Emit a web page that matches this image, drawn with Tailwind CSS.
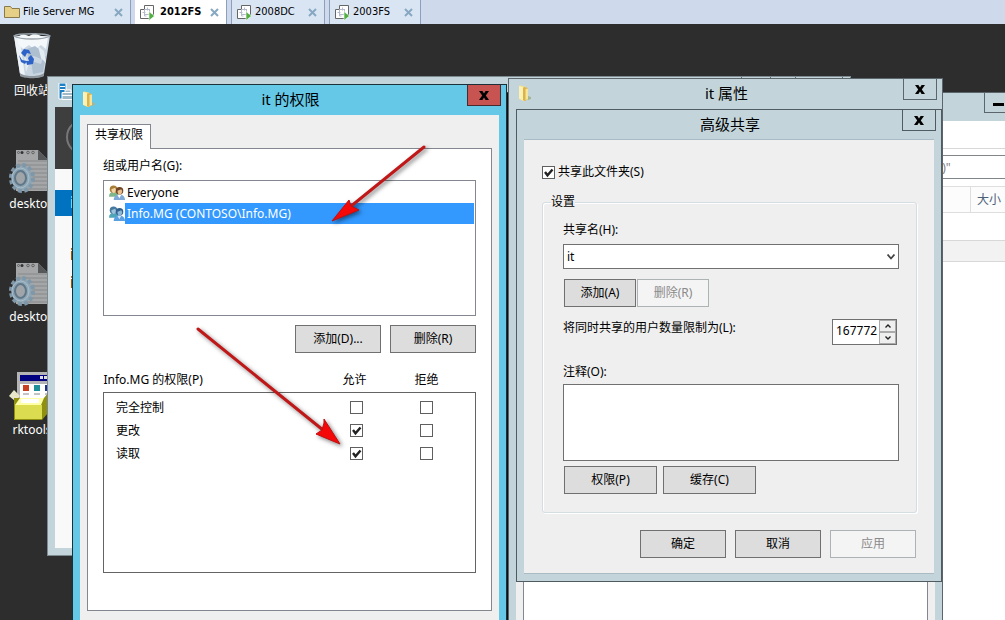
<!DOCTYPE html>
<html lang="zh-CN">
<head>
<meta charset="utf-8">
<meta name="viewport" content="width=device-width, initial-scale=1">
<title>2012FS</title>
<script src="https://cdn.jsdelivr.net/npm/@tailwindcss/browser@4"></script>
</head>
<body class="flex h-screen flex-col overflow-hidden bg-[#2d2d2d] font-['Noto_Sans','Noto_Sans_CJK_SC',sans-serif] text-xs leading-4 text-black">

<!-- Shared symbols -->
<svg class="hidden" aria-hidden="true">
  <symbol id="x" viewBox="0 0 10 9"><path d="M0 0h3.400L5 2.600 6.600 0H10L6.800 4.500 10 9H6.600L5 6.400 3.400 9H0l3.200-4.500z" fill="currentColor"/></symbol>
  <symbol id="tabx" viewBox="0 0 9 9"><path d="M1 1l7 7M8 1L1 8" stroke="#86a8c0" stroke-width="2" fill="none"/></symbol>
  <symbol id="check" viewBox="0 0 13 13"><path d="M3 6l2.500 3.300L10.500 3.500" stroke="#222" stroke-width="2.400" fill="none"/></symbol>
  <symbol id="vm" viewBox="0 0 17 17">
    <path d="M5.500 1.500h9v9h-9z" fill="#fff" stroke="#666"/>
    <path d="M1.500 5.500h9v9h-9z" fill="#fff" stroke="#666"/>
    <path d="M5.500 5.500h5v5h-5z" fill="#fff" stroke="#b4bccb"/>
    <path d="M3.500 8.500h3M8.500 3.500v3M5.500 8v4h2" stroke="#b4bccb" fill="none"/>
    <path d="M10 7.500v9l5.500-4.500z" fill="#52b043" stroke="#fff" stroke-width=".6"/>
  </symbol>
  <symbol id="folder" viewBox="0 0 14 16">
    <path d="M1 1l1-.5 5 1 1 2v12l-2 .5-5-2z" fill="#f3dc82"/>
    <path d="M1 1l4 1v13.500l-4-2z" fill="#fdf2b4"/>
    <path d="M5 3l1-1 4 1v11l-3 2-2-1z" fill="#dcb24e"/>
    <path d="M7.500 4l2.500-.5V14l-2.500 1z" fill="#f6e49a"/>
    <path d="M10 11l3 1v2l-3 1z" fill="#a3b797"/>
  </symbol>
  <symbol id="users" viewBox="0 0 17 16">
    <path d="M0 12c0-3.500 2-5 5-5s5 2 5 5z" fill="#7fb68c"/>
    <circle cx="4.800" cy="4" r="4" fill="#a87e34"/><path d="M2.500 4l4-1.500 1 2c0 2-1 3.500-2.500 3.500s-2.500-2-2.500-4z" fill="#f2d3a4"/>
    <path d="M5 15.500c0-4 2.500-6 6-6s6 2 6 6z" fill="#7fa9d8"/><path d="M9 10l2 3.500 2-3.500z" fill="#fff"/>
    <circle cx="11.200" cy="5.500" r="4" fill="#6e4326"/><path d="M9 5.500L13 4l1 2c0 2-1 3.800-2.600 3.800S9 7.800 9 5.500z" fill="#e9bf8c"/>
  </symbol>
  <symbol id="users-sel" viewBox="0 0 17 16">
    <path d="M0 12c0-3.500 2-5 5-5s5 2 5 5z" fill="#4fa5b8"/>
    <circle cx="4.800" cy="4" r="4" fill="#4679a0"/><path d="M2.500 4l4-1.500 1 2c0 2-1 3.500-2.500 3.500s-2.500-2-2.500-4z" fill="#9cc1dc"/>
    <path d="M5 15.500c0-4 2.500-6 6-6s6 2 6 6z" fill="#5a9fdf"/><path d="M9 10l2 3.500 2-3.500z" fill="#cfe6fa"/>
    <circle cx="11.200" cy="5.500" r="4" fill="#2f5f8c"/><path d="M9 5.500L13 4l1 2c0 2-1 3.800-2.600 3.800S9 7.800 9 5.500z" fill="#8db8da"/>
  </symbol>
  <symbol id="ini" viewBox="0 0 48 48">
    <path d="M8 4h22l10 10v31H8z" fill="#a4a6a8"/>
    <path d="M30 4v10h10z" fill="#56585a"/>
    <path d="M10 15h29M10 19h29M10 23h29M10 27h29M10 31h29M10 35h29M10 39h29M10 43h29" stroke="#86888a"/>
    <circle cx="14" cy="6.500" r="1.500" fill="#333"/><g fill="none" stroke="#606264"><circle cx="20" cy="6.500" r="1.300"/><circle cx="25" cy="6.500" r="1.300"/><circle cx="10.500" cy="6.500" r="1"/></g>
    <ellipse cx="14" cy="32" rx="10.500" ry="12.500" fill="#8fa6b5"/>
    <ellipse cx="14" cy="32" rx="11" ry="13" fill="none" stroke="#7f98a9" stroke-width="4" stroke-dasharray="3.800 2.500"/>
    <ellipse cx="12.500" cy="32" rx="5.500" ry="7" fill="#a0a5a9" stroke="#5f7788" stroke-width="2"/>
    <ellipse cx="12.500" cy="32" rx="8.500" ry="10" fill="none" stroke="#a9bfcd"/>
  </symbol>
</svg>

<nav class="flex h-6 shrink-0 gap-1 bg-[#ced9ec] font-['DejaVu_Sans_Condensed','DejaVu_Sans',sans-serif] text-[11px]" aria-label="虚拟机">
  <div class="flex w-[131px] items-center border-r border-[#8d9fbd] bg-[#dae5f4] pl-1 pr-[7px]">
    <svg class="h-3 w-4" viewBox="0 0 16 12"><path d="M.5 11.500V.5h6l1.500 2h7.500v9z" fill="#e6cf86" stroke="#8b7a4b"/></svg>
    <button class="ml-[3px] whitespace-nowrap">File Server MG</button>
    <button class="ml-auto" aria-label="关闭"><svg class="size-[9px]"><use href="#tabx"/></svg></button>
  </div>
  <div class="flex w-[92px] items-center border-r border-[#8d9fbd] bg-white pl-1 pr-[7px]">
    <svg class="size-[17px]"><use href="#vm"/></svg>
    <button class="ml-1 font-bold">2012FS</button>
    <button class="ml-auto" aria-label="关闭"><svg class="size-[9px]"><use href="#tabx"/></svg></button>
  </div>
  <div class="flex w-[94px] items-center border-x border-[#8d9fbd] bg-[#dae5f4] pl-1 pr-[7px]">
    <svg class="size-[17px]"><use href="#vm"/></svg>
    <button class="ml-[2px]">2008DC</button>
    <button class="ml-auto" aria-label="关闭"><svg class="size-[9px]"><use href="#tabx"/></svg></button>
  </div>
  <div class="flex w-[92px] items-center border-x border-[#8d9fbd] bg-[#dae5f4] pl-1 pr-[7px]">
    <svg class="size-[17px]"><use href="#vm"/></svg>
    <button class="ml-[2px]">2003FS</button>
    <button class="ml-auto" aria-label="关闭"><svg class="size-[9px]"><use href="#tabx"/></svg></button>
  </div>
</nav>

<main class="relative flex-1 overflow-hidden">

  <!-- Desktop icons -->
  <div class="flex w-16 flex-col gap-[47px] pt-[9px] text-center text-white">
    <div class="flex flex-col items-center gap-[2px]">
      <svg class="size-12" viewBox="0 0 48 48">
        <path d="M6 3l6 38c3 4 20 4 24 0l6-38z" fill="#c9d6e2"/>
        <path d="M6 3l6 38c1 1 3 2 5 2L12 8z" fill="#eef3f7"/>
        <path d="M9 4l6-3 6 2 6-3 6 3 7 1-2 12-5-4-6 5-6-5-6 4-5-5z" fill="#f5f8fa"/>
        <path d="M19 16l8-3 9 7-3 6-7-3-6 2zM23 28l10 3 2-6 3-2-3 16-10 2z" fill="#aebfd0"/>
        <path d="M30 13l6 5 2 12-5-5zM16 22l5 9-3 8z" fill="#e4ebf1"/>
        <path d="M13 20l3-4 5 1 2 4-4-1-2 4zM11 22l3 5 5 1-2 3-4-2zM20 25l3-3 3 4-1 5-6 1-1-4h3z" fill="#2d62c8"/>
        <path d="M6 3c6 4 30 4 36 0-4-3-32-3-36 0z" fill="none" stroke="#9aa3ab" stroke-width="1.500"/>
        <path d="M12 40c4 4 20 4 24 0v3c-4 3-20 3-24 0z" fill="#8f979e"/>
      </svg>
      <span>回收站</span>
    </div>
    <div class="flex flex-col items-center gap-[2px]"><svg class="size-12"><use href="#ini"/></svg><span>desktop</span></div>
    <div class="flex flex-col items-center gap-[2px]"><svg class="size-12"><use href="#ini"/></svg><span>desktop</span></div>
    <div class="flex flex-col items-center gap-[2px]">
      <svg class="size-12" viewBox="0 0 48 48">
        <path d="M9 0h39v32H9z" fill="#b4b4b4"/><path d="M12 3h36v6H12z" fill="#000080"/>
        <path d="M32 4h3v3h-3zM36 4h3v3h-3z" fill="#ddd"/><path d="M12 12h36v18H12z" fill="#fff"/>
        <path d="M15 13h6v6h-6z" fill="#c84020"/><path d="M26 13h6v6h-6z" fill="#209098"/><path d="M37 13h6v6h-6z" fill="#203090"/>
        <path d="M15 22h6M26 22h6M37 22h6" stroke="#888"/>
        <path d="M1 24l5-6 6 6-5 5z" fill="#e8e8c8"/><path d="M6 26h30l4-5v20l-6 7H6z" fill="#8f8f10"/>
        <path d="M7 33h27v14H7z" fill="#dcdc50"/><path d="M7 33l5-7h24l-3 7z" fill="#ffffa8"/><path d="M13 27h18v4H13z" fill="#fff"/>
      </svg>
      <span>rktools</span>
    </div>
  </div>

  <!-- Server manager -->
  <section class="absolute left-[47px] top-[52px] flex h-[480px] w-[804px] flex-col border border-[#7d8a8f] bg-[#c3d5da] px-[7px] pb-[7px]">
    <header class="flex h-[30px] shrink-0 items-start">
      <svg class="ml-[2px] mt-[6px] size-[17px]" viewBox="0 0 17 17"><path d="M2 0h7v16H2z" fill="#1d80c4" stroke="#fff"/><path d="M3 3.500h5M3 6.500h5" stroke="#fff"/><path d="M5 9.500h12v7H5zM8 9V7h6v2M5 12.500h12" fill="#9fb9c6" stroke="#fff"/></svg>
      <div class="ml-auto flex">
        <button class="h-5 w-[30px] border-x border-b border-[#5a666b]" aria-label="最小化"></button>
        <button class="h-5 w-[25px] border-b border-r border-[#5a666b]" aria-label="最大化"></button>
        <button class="h-5 w-[47px] border-b border-r border-[#5a666b]" aria-label="关闭"></button>
      </div>
    </header>
    <div class="h-[62px] shrink-0 bg-[#3e3e3e] pl-[11px] pt-3"><div class="size-9 rounded-full border-2 border-[#77777a]"></div></div>
    <div class="flex-1 bg-[#f9f9f9] pt-[21px]">
      <div class="h-[26px] bg-[#0072c0] pl-[15px] text-base leading-6 text-white">i</div>
      <div class="pl-[15px] pt-6 text-base leading-7">i<br>i</div>
    </div>
  </section>

  <!-- File explorer -->
  <section class="absolute left-[507px] top-[68px] flex h-[600px] w-[583px] flex-col border border-[#5a666b] border-l-[#101010] bg-[#c3d5da]">
    <header class="flex h-[28px] shrink-0 justify-end pr-1">
      <button class="flex h-5 w-[29px] items-center border border-t-0 border-[#5a666b] pl-2 pt-1" aria-label="最小化"><span class="h-[3px] w-[11px] bg-black"></span></button>
      <button class="h-5 w-[25px] border-b border-r border-[#5a666b]" aria-label="最大化"></button>
      <button class="h-5 w-[47px] border-b border-r border-[#5a666b]" aria-label="关闭"></button>
    </header>
    <div class="flex-1 bg-white">
      <div class="h-[28px] border-b border-[#d8d8d8]"></div>
      <div class="pb-[7px] pl-[390px] pt-[6px]"><div class="h-6 border border-[#7f8588] pl-10 leading-6 text-[#808080]">:)"</div></div>
      <div class="flex h-[27px] border-y border-[#dedede] bg-[#fcfcfc] pl-[462px] text-[#4c607a]"><div class="border-l border-[#dedede] pl-[6px] leading-[26px]">大小</div></div>
      <div class="mt-[27px] h-[22px] border-y border-[#d8d8d8] bg-[#f2f2f2]"></div>
    </div>
  </section>

  <!-- it 属性 -->
  <section class="absolute -bottom-10 left-[508px] top-[54px] flex w-[435px] flex-col border border-[#5a666b] bg-[#c3d5da] px-[7px]">
    <header class="-mr-[2px] grid h-[30px] shrink-0 grid-cols-[1fr_auto_1fr] items-start">
      <svg class="ml-[2px] mt-[6px] h-4 w-[14px]"><use href="#folder"/></svg>
      <h2 class="text-[15px] leading-7">it 属性</h2>
      <button class="flex h-[21px] w-[34px] items-center justify-center justify-self-end border border-t-0 border-[#5a666b]" aria-label="关闭"><svg class="h-[9px] w-[10px]"><use href="#x"/></svg></button>
    </header>
    <div class="flex flex-1 bg-[#efefef] px-[7px]"><div class="flex-1 border-x border-[#828790] bg-white"></div></div>
  </section>

  <!-- 高级共享 -->
  <section class="absolute left-[516px] top-[85px] w-[426px] border border-[#4f5b61] bg-[#c3d5da] px-[7px] pb-[7px]">
    <header class="-mr-[2px] grid h-[29px] grid-cols-[1fr_auto_1fr] items-start">
      <span></span>
      <h2 class="text-[15px] leading-7">高级共享</h2>
      <button class="flex h-[21px] w-[34px] items-center justify-center justify-self-end border border-t-0 border-[#4f5b61]" aria-label="关闭"><svg class="h-[9px] w-[10px]"><use href="#x"/></svg></button>
    </header>
    <form class="border-y border-[#a9bcc3] bg-[#efefef] pb-[15px] pl-[18px] pr-[17px] pt-6" onsubmit="return false">
      <label class="flex items-center gap-[3px]">
        <span class="grid"><input type="checkbox" checked class="peer col-start-1 row-start-1 size-[13px] appearance-none border border-[#5f5f5f] bg-white"><svg class="pointer-events-none invisible col-start-1 row-start-1 size-[13px] peer-checked:visible"><use href="#check"/></svg></span>
        共享此文件夹(S)
      </label>
      <fieldset class="mt-[14px] rounded-[3px] border border-[#d3dde2] px-5 pb-[18px] shadow-[inset_1px_1px_0_#fff,1px_1px_0_#fff]">
        <legend class="-ml-3 bg-[#efefef]">设置</legend>
        <label for="share" class="mt-3 block">共享名(H):</label>
        <div class="mr-[-3px] mt-[6px] grid items-center">
          <select id="share" class="col-start-1 row-start-1 h-[25px] w-full appearance-none border border-[#707070] bg-white px-[3px]"><option>it</option></select>
          <svg class="pointer-events-none col-start-1 row-start-1 mr-1 h-[6px] w-2 justify-self-end" viewBox="0 0 8 6"><path d="M.5.5L4 4.500 7.500.5" stroke="#444" stroke-width="1.800" fill="none"/></svg>
        </div>
        <div class="mt-[10px] flex gap-px pl-px">
          <button class="h-7 w-[72px] border border-[#707070] bg-[#dddddd]">添加(A)</button>
          <button disabled class="h-7 w-[72px] border border-[#adb2b5] bg-[#f4f4f4] text-[#8a8a8a]">删除(R)</button>
        </div>
        <div class="mt-3 flex items-start justify-between">
          <label for="limit" class="mt-px">将同时共享的用户数量限制为(L):</label>
          <div class="-mr-px flex h-[26px] border border-[#707070] bg-white">
            <input id="limit" type="text" value="167772" class="w-[46px] pl-[3px] pb-[3px]">
            <div class="flex w-[17px] flex-col gap-[2px] bg-[#ababab] p-px">
              <button class="flex flex-1 items-center justify-center bg-[#efefef]" aria-label="增加"><svg class="h-1 w-[6px]" viewBox="0 0 6 4"><path d="M.5 3.500L3 1l2.500 2.500" stroke="#222" stroke-width="1.400" fill="none"/></svg></button>
              <button class="flex flex-1 items-center justify-center bg-[#efefef]" aria-label="减少"><svg class="h-1 w-[6px]" viewBox="0 0 6 4"><path d="M.5.5L3 3 5.500.5" stroke="#222" stroke-width="1.400" fill="none"/></svg></button>
            </div>
          </div>
        </div>
        <label for="note" class="mt-[19px] block">注释(O):</label>
        <textarea id="note" class="mt-1 -mr-[3px] block h-[77px] w-[calc(100%+3px)] resize-none border border-[#707070] bg-white"></textarea>
        <div class="mt-[5px] flex gap-[6px] pl-px">
          <button class="h-7 w-[93px] border border-[#707070] bg-[#dddddd]">权限(P)</button>
          <button class="h-7 w-[93px] border border-[#707070] bg-[#dddddd]">缓存(C)</button>
        </div>
      </fieldset>
      <div class="mr-px mt-[17px] flex justify-end gap-[9px]">
        <button class="h-7 w-[86px] border border-[#707070] bg-[#dddddd]">确定</button>
        <button class="h-7 w-[86px] border border-[#707070] bg-[#dddddd]">取消</button>
        <button disabled class="h-7 w-[86px] border border-[#adb2b5] bg-[#f4f4f4] text-[#8a8a8a]">应用</button>
      </div>
    </form>
  </section>

  <!-- it 的权限 -->
  <section class="absolute left-[72px] top-[60px] w-[435px] border border-[#1c3039] bg-[#66c8e7] px-[7px]">
    <header class="-mr-[2px] grid h-[30px] grid-cols-[1fr_auto_1fr] items-start">
      <svg class="ml-[2px] mt-[6px] h-4 w-[14px]"><use href="#folder"/></svg>
      <h2 class="text-[15px] leading-7">it 的权限</h2>
      <button class="flex h-[21px] w-[34px] items-center justify-center justify-self-end border border-t-0 border-[#4a2a2c] bg-[#c75450]" aria-label="关闭"><svg class="h-[9px] w-[10px]"><use href="#x"/></svg></button>
    </header>
    <form class="bg-[#efefef] px-[7px] pb-10 pt-[9px]" onsubmit="return false">
      <div class="flex items-stretch">
        <button class="h-[25px] w-16 border border-b-0 border-[#828790] bg-white pb-1">共享权限</button>
        <div class="flex-1 border-b border-[#828790]"></div>
      </div>
      <div class="border border-t-0 border-[#828790] bg-white px-[15px] pb-[37px] pt-[9px]">
        <div>组或用户名(G):</div>
        <ul class="mt-[6px] h-[136px] border border-[#828790] py-px pl-[5px] pr-px">
          <li class="flex h-[21px] items-center"><svg class="h-4 w-4 shrink-0"><use href="#users"/></svg><span class="px-[2px]">Everyone</span></li>
          <li class="flex h-[21px] items-center"><svg class="h-4 w-4 shrink-0"><use href="#users-sel"/></svg><span class="flex-1 bg-[#3399ff] pl-[2px] leading-[21px] text-white">Info.MG (CONTOSO\Info.MG)</span></li>
        </ul>
        <div class="mt-[9px] flex justify-end gap-[9px]">
          <button class="h-7 w-[86px] border border-[#707070] bg-[#dddddd]">添加(D)...</button>
          <button class="h-7 w-[86px] border border-[#707070] bg-[#dddddd]">删除(R)</button>
        </div>
        <table class="mt-[19px] w-full table-fixed border-collapse">
          <colgroup><col><col class="w-[70px]"><col class="w-[70px]"><col class="w-[14px]"></colgroup>
          <thead>
            <tr class="h-5 align-top"><th class="p-0 text-left font-normal">Info.MG 的权限(P)</th><th class="p-0 pr-1 font-normal">允许</th><th class="p-0 font-normal">拒绝</th><td class="p-0"></td></tr>
          </thead>
          <tbody class="border border-[#646464]">
            <tr class="h-1"><td colspan="4" class="p-0"></td></tr>
            <tr class="h-[23px]">
              <th class="p-0 pl-3 text-left font-normal">完全控制</th>
              <td class="p-0"><span class="grid justify-center"><input type="checkbox" aria-label="完全控制 允许" class="size-[13px] appearance-none border border-[#5f5f5f] bg-white"></span></td>
              <td class="p-0"><span class="grid justify-center"><input type="checkbox" aria-label="完全控制 拒绝" class="size-[13px] appearance-none border border-[#5f5f5f] bg-white"></span></td><td></td>
            </tr>
            <tr class="h-[23px]">
              <th class="p-0 pl-3 text-left font-normal">更改</th>
              <td class="p-0"><span class="grid justify-center"><input type="checkbox" checked aria-label="更改 允许" class="peer col-start-1 row-start-1 size-[13px] appearance-none border border-[#5f5f5f] bg-white"><svg class="pointer-events-none invisible col-start-1 row-start-1 size-[13px] peer-checked:visible"><use href="#check"/></svg></span></td>
              <td class="p-0"><span class="grid justify-center"><input type="checkbox" aria-label="更改 拒绝" class="size-[13px] appearance-none border border-[#5f5f5f] bg-white"></span></td><td></td>
            </tr>
            <tr class="h-[23px]">
              <th class="p-0 pl-3 text-left font-normal">读取</th>
              <td class="p-0"><span class="grid justify-center"><input type="checkbox" checked aria-label="读取 允许" class="peer col-start-1 row-start-1 size-[13px] appearance-none border border-[#5f5f5f] bg-white"><svg class="pointer-events-none invisible col-start-1 row-start-1 size-[13px] peer-checked:visible"><use href="#check"/></svg></span></td>
              <td class="p-0"><span class="grid justify-center"><input type="checkbox" aria-label="读取 拒绝" class="size-[13px] appearance-none border border-[#5f5f5f] bg-white"></span></td><td></td>
            </tr>
            <tr class="h-[107px]"><td colspan="4" class="p-0"></td></tr>
          </tbody>
        </table>
      </div>
    </form>
  </section>

  <!-- Annotation arrows -->
  <svg class="pointer-events-none absolute left-[190px] top-[116px] h-[320px] w-[250px] drop-shadow-[2px_2px_2px_rgba(0,0,0,0.5)]" viewBox="190 140 250 320" aria-hidden="true">
    <path d="M424 147L350 207M198 329L323 430" stroke="#c01818" stroke-width="3" stroke-linecap="round"/>
    <path d="M332 221l17-21 2 6 8 4zM340 444l-24-10 6-4 2-7 0-4z" fill="#f40808" stroke="#c01010" stroke-width="1"/>
  </svg>
</main>
</body>
</html>
